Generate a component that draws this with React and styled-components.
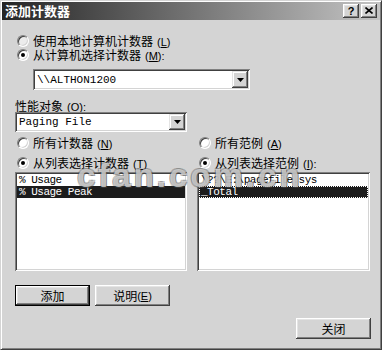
import React from 'react';
import styled, { createGlobalStyle } from 'styled-components';

const Global = createGlobalStyle`
  html, body { margin: 0; padding: 0; background: #ffffff; }
  body { font-family: "Noto Sans CJK SC", "Liberation Sans", sans-serif; color: #000; }
`;

const Window = styled.div`
  position: relative;
  box-sizing: border-box;
  width: 382px;
  height: 350px;
  padding: 1px;
  background: #d4d4d4;
  border: 1px solid;
  border-color: #d4d4d4 #404040 #404040 #d4d4d4;
  box-shadow: inset 1px 1px #ffffff, inset -1px -1px #808080;
  display: flex;
  flex-direction: column;
  overflow: hidden;
`;

const TitleBar = styled.div`
  height: 18px;
  display: flex;
  align-items: center;
  padding: 0 3px 0 3px;
  background: linear-gradient(to right, #242424, #c4c4c4);
`;

const TitleText = styled.div`
  flex: 1;
  color: #ffffff;
  font-size: 13px;
  font-weight: bold;
  line-height: 18px;
`;

const TitleButtons = styled.div`
  display: flex;
  gap: 2px;
`;

const CaptionButton = styled.div`
  box-sizing: border-box;
  width: 16px;
  height: 14px;
  background: #d4d4d4;
  box-shadow: inset -1px -1px #404040, inset 1px 1px #ffffff, inset -2px -2px #808080, inset 2px 2px #e4e4e4;
  display: flex;
  align-items: center;
  justify-content: center;
  font-family: "Liberation Sans", sans-serif;
  font-weight: bold;
  font-size: 11px;
  line-height: 14px;
  padding-bottom: 1px;
`;

const Body = styled.div`
  flex: 1;
  display: flex;
  flex-direction: column;
  padding: 14px 9px 0 13px;
`;

const RadioGroup = styled.div`
  display: flex;
  flex-direction: column;
  gap: ${(p) => p.$gap || 0}px;
`;

const RadioRow = styled.div`
  height: 14px;
  display: flex;
  align-items: center;
  gap: 4px;
  padding-left: 2px;
  font-size: 12px;
  line-height: 14px;
  white-space: nowrap;
`;

const RadioCircle = styled.span`
  box-sizing: border-box;
  position: relative;
  width: 12px;
  height: 12px;
  border-radius: 50%;
  background: ${(p) => (p.$dim ? '#ececec' : '#ffffff')};
  border: 1px solid;
  border-color: #808080 #ffffff #ffffff #808080;
  box-shadow: inset 1px 1px #404040, inset -1px -1px #d4d4d4;
  flex: none;
  &::after {
    content: '';
    display: ${(p) => (p.$checked ? 'block' : 'none')};
    position: absolute;
    left: 3px;
    top: 3px;
    width: 4px;
    height: 4px;
    border-radius: 50%;
    background: #000;
  }
`;

const Key = styled.span`
  font-family: "Liberation Sans", sans-serif;
  font-size: 11px;
  margin-left: ${(p) => (p.$tight ? 0 : 4)}px;
  & u { text-decoration: underline; text-underline-offset: 1px; }
`;

const Combo = styled.div`
  box-sizing: border-box;
  display: flex;
  width: ${(p) => p.$w}px;
  height: ${(p) => p.$h || 21}px;
  margin-left: ${(p) => p.$ml || 0}px;
  margin-top: ${(p) => p.$mt || 0}px;
  padding: 2px;
  background: #ffffff;
  box-shadow: inset 1px 1px #808080, inset -1px -1px #ffffff, inset 2px 2px #404040, inset -2px -2px #d4d4d4;
`;

const ComboText = styled.div`
  flex: 1;
  padding-left: 2px;
  display: flex;
  align-items: center;
  font-family: "Liberation Mono", monospace;
  font-size: 11px;
  white-space: nowrap;
`;

const DropButton = styled.div`
  box-sizing: border-box;
  width: 16px;
  background: #d4d4d4;
  box-shadow: inset -1px -1px #404040, inset 1px 1px #e4e4e4, inset -2px -2px #808080, inset 2px 2px #ffffff;
  display: flex;
  align-items: center;
  justify-content: center;
`;

const Label = styled.div`
  margin-top: 9px;
  height: 13px;
  line-height: 13px;
  font-size: 12px;
  white-space: nowrap;
`;

const Columns = styled.div`
  display: grid;
  grid-template-columns: 172px 173px;
  column-gap: 10px;
  margin-top: 4px;
`;

const Column = styled.div`
  display: flex;
  flex-direction: column;
`;

const ListBox = styled.div`
  box-sizing: border-box;
  margin-top: 2px;
  height: 99px;
  padding: 2px;
  background: #ffffff;
  box-shadow: inset 1px 1px #808080, inset -1px -1px #ffffff, inset 2px 2px #404040, inset -2px -2px #d4d4d4;
  display: flex;
  flex-direction: column;
`;

const ListItem = styled.div`
  height: 12px;
  line-height: 12px;
  padding-left: 2px;
  font-family: "Liberation Mono", monospace;
  font-size: 11px;
  letter-spacing: -0.5px;
  white-space: nowrap;
  background: ${(p) => (p.$sel ? '#1c1c1c' : 'transparent')};
  color: ${(p) => (p.$sel ? '#ffffff' : '#000000')};
  outline: ${(p) => (p.$focus ? '1px dotted #ffffff' : 'none')};
  outline-offset: -1px;
`;

const ButtonRow = styled.div`
  display: flex;
  gap: 5px;
  margin-top: 14px;
`;

const Button = styled.div`
  box-sizing: border-box;
  width: 75px;
  height: 21px;
  background: #d4d4d4;
  display: flex;
  align-items: center;
  justify-content: center;
  font-size: 12px;
  white-space: nowrap;
  align-self: ${(p) => (p.$end ? 'flex-end' : 'auto')};
  margin-top: ${(p) => p.$mt || 0}px;
  border: ${(p) => (p.$default ? '1px solid #000' : 'none')};
  box-shadow: inset -1px -1px #404040, inset 1px 1px #ffffff, inset -2px -2px #808080, inset 2px 2px #e4e4e4;
`;

const Watermark = styled.div`
  position: absolute;
  left: 76px;
  top: 156px;
  font-family: "Liberation Sans", sans-serif;
  font-weight: bold;
  font-size: 33px;
  line-height: normal;
  letter-spacing: 3px;
  color: rgba(222, 222, 222, 0.75);
  text-shadow: 1px 1px 0 rgba(70, 70, 70, 0.5), -1px -1px 0 rgba(70, 70, 70, 0.32),
    1px -1px 0 rgba(70, 70, 70, 0.32), -1px 1px 0 rgba(70, 70, 70, 0.32);
  pointer-events: none;
  white-space: nowrap;
`;

const Arrow = () => (
  <svg width="7" height="4" viewBox="0 0 7 4">
    <polygon points="0,0 7,0 3.5,4" fill="#000" />
  </svg>
);

const CloseGlyph = () => (
  <svg width="8" height="7" viewBox="0 0 8 7">
    <path d="M0.5 0.5 L7.5 6.5 M7.5 0.5 L0.5 6.5" stroke="#000" strokeWidth="1.6" />
  </svg>
);

const Radio = ({ checked, dim, children }) => (
  <RadioRow>
    <RadioCircle $checked={checked} $dim={dim} />
    <span>{children}</span>
  </RadioRow>
);

export default function App() {
  return (
    <>
      <Global />
      <Window>
        <TitleBar>
          <TitleText>添加计数器</TitleText>
          <TitleButtons>
            <CaptionButton>?</CaptionButton>
            <CaptionButton><CloseGlyph /></CaptionButton>
          </TitleButtons>
        </TitleBar>
        <Body>
          <RadioGroup>
            <Radio dim>使用本地计算机计数器<Key>(<u>L</u>)</Key></Radio>
            <Radio checked>从计算机选择计数器<Key>(<u>M</u>):</Key></Radio>
          </RadioGroup>
          <Combo $w={217} $ml={18} $mt={7}>
            <ComboText>\\ALTHON1200</ComboText>
            <DropButton><Arrow /></DropButton>
          </Combo>
          <Label>性能对象<Key>(<u>O</u>):</Key></Label>
          <Combo $w={172} $h={20}>
            <ComboText>Paging File</ComboText>
            <DropButton><Arrow /></DropButton>
          </Combo>
          <Columns>
            <Column>
              <RadioGroup $gap={6}>
                <Radio>所有计数器<Key>(<u>N</u>)</Key></Radio>
                <Radio checked>从列表选择计数器<Key>(<u>T</u>)</Key></Radio>
              </RadioGroup>
              <ListBox>
                <ListItem>% Usage</ListItem>
                <ListItem $sel>% Usage Peak</ListItem>
              </ListBox>
            </Column>
            <Column>
              <RadioGroup $gap={6}>
                <Radio>所有范例<Key>(<u>A</u>)</Key></Radio>
                <Radio checked>从列表选择范例<Key>(<u>I</u>):</Key></Radio>
              </RadioGroup>
              <ListBox>
                <ListItem>\??\E:\pagefile.sys</ListItem>
                <ListItem $sel $focus>_Total</ListItem>
              </ListBox>
            </Column>
          </Columns>
          <ButtonRow>
            <Button $default>添加</Button>
            <Button>说明<Key $tight>(<u>E</u>)</Key></Button>
          </ButtonRow>
          <Button $end $mt={12}>关闭</Button>
        </Body>
        <Watermark>cfan.com.cn</Watermark>
      </Window>
    </>
  );
}
